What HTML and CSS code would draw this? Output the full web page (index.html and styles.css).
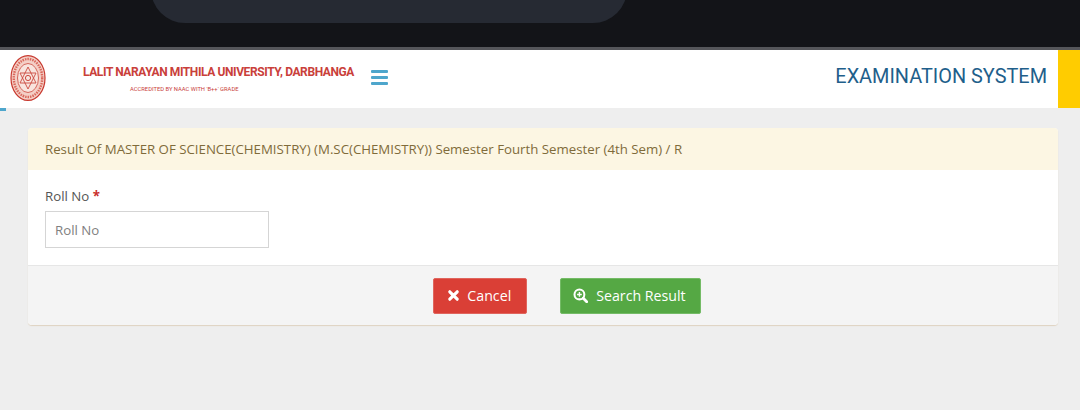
FILE: index.html
```html
<!DOCTYPE html>
<html lang="en">
<head>
    <meta charset="UTF-8">
    <meta name="viewport" content="width=device-width, initial-scale=1.0">
    <title>Examination System</title>
    <link rel="stylesheet" href="styles.css">
</head>
<body>
    <div class="statusbar"><div class="notch"></div></div>

    <header class="topnav">
        <svg class="seal" viewBox="0 0 36 46" aria-hidden="true">
            <ellipse cx="18" cy="23" rx="17" ry="22.4" fill="#f4cfc6" stroke="#c8392f" stroke-width="1.2"/>
            <ellipse cx="18" cy="23" rx="14.2" ry="19" fill="none" stroke="#d9685c" stroke-width="2.4" stroke-dasharray="1.5 1"/>
            <ellipse cx="18" cy="23" rx="10.5" ry="14.5" fill="#f8e4de" stroke="#cc463b" stroke-width="0.8"/>
            <path d="M18 12 L26 28 L10 28 Z M18 34 L10 18 L26 18 Z" fill="none" stroke="#cc4a40" stroke-width="0.9"/>
            <circle cx="18" cy="23" r="2.6" fill="none" stroke="#cc4a40"/>
        </svg>
        <div class="brand">
            <div class="brand-name">LALIT NARAYAN MITHILA UNIVERSITY, DARBHANGA</div>
            <div class="brand-sub">ACCREDITED BY NAAC WITH 'B++' GRADE</div>
        </div>
        <button class="menu-toggle" aria-label="Menu"><span></span><span></span><span></span></button>
        <div class="system-name">EXAMINATION SYSTEM</div>
        <div class="accent"></div>
    </header>
    <div class="loader"></div>

    <main class="content">
        <section class="panel">
            <div class="panel-heading">Result Of MASTER OF SCIENCE(CHEMISTRY) (M.SC(CHEMISTRY)) Semester Fourth Semester (4th Sem) / R</div>
            <div class="panel-body">
                <label class="field-label" for="rollno">Roll No <span class="required">*</span></label>
                <input class="field-input" type="text" id="rollno" placeholder="Roll No">
            </div>
            <div class="panel-footer">
                <button class="btn btn-cancel">
                    <svg class="btn-icon" viewBox="0 0 14 14" aria-hidden="true"><path d="M3 3 L11 11 M11 3 L3 11" stroke="#fff" stroke-width="3.4" stroke-linecap="round" fill="none"/></svg>
                    Cancel
                </button>
                <button class="btn btn-search">
                    <svg class="btn-icon" viewBox="0 0 14 14" aria-hidden="true"><circle cx="6" cy="6" r="4.6" stroke="#fff" stroke-width="1.9" fill="none"/><path d="M9.6 9.6 L12.8 12.8" stroke="#fff" stroke-width="2.6" stroke-linecap="round"/><path d="M6 3.8 V8.2 M3.8 6 H8.2" stroke="#fff" stroke-width="1.3"/></svg>
                    Search Result
                </button>
            </div>
        </section>
    </main>
</body>
</html>
```

FILE: styles.css
```css
* {
    box-sizing: border-box;
}

html, body {
    height: 100%;
}

body {
    margin: 0;
    background: #eeeeee;
    font-family: "Open Sans", sans-serif;
    font-size: 13.25px;
    color: #444;
    overflow: hidden;
}

.statusbar {
    height: 50px;
    background: #131418;
    border-bottom: 3px solid #55565a;
    padding-left: 151px;
    overflow: hidden;
}

/* only the bottom of the rounded shape shows, the rest is cut off at the top */
.notch {
    width: 476px;
    height: 68px;
    margin-top: -45px;
    background: #262a33;
    border-radius: 45px;
}

.topnav {
    height: 58px;
    background: #fff;
    display: flex;
    align-items: center;
    padding-left: 10px;
}

.seal {
    width: 36px;
    height: 46px;
    flex: none;
    margin-top: -2px;
}

.brand {
    margin-left: 37px;
    width: 270px;
    flex: none;
    margin-top: -1px;
    color: #c9403a;
}

.brand-name {
    font-family: "Roboto", sans-serif;
    font-size: 12px;
    letter-spacing: -0.4px;
    font-weight: 700;
    line-height: 16px;
    white-space: nowrap;
}

.brand-sub {
    margin: 5px 0 0 47px;
    font-family: "Roboto", sans-serif;
    font-size: 5.8px;
    line-height: 8px;
    white-space: nowrap;
}

.menu-toggle {
    margin-left: 18px;
    margin-top: -3px;
    width: 17px;
    padding: 0;
    border: 0;
    background: none;
    display: flex;
    flex-direction: column;
    gap: 3px;
}

.menu-toggle span {
    height: 3px;
    background: #4ea6cc;
    border-radius: 1px;
}

.system-name {
    margin-left: auto;
    margin-right: 11px;
    margin-top: -6px;
    font-family: "Roboto", sans-serif;
    font-size: 19.9px;
    color: #1f5f8b;
    white-space: nowrap;
}

.accent {
    width: 22px;
    height: 100%;
    background: #ffcc00;
}

.loader {
    width: 6px;
    height: 3px;
    background: #4ea6cc;
}

.content {
    padding: 17px 22px 0 28px;
}

.panel {
    background: #fff;
    border-radius: 4px;
    box-shadow: 0 1px 1px rgba(190, 150, 90, 0.3);
    overflow: hidden;
}

.panel-heading {
    height: 42px;
    padding: 0 17px;
    background: #fcf6e3;
    color: #7f6b3a;
    display: flex;
    align-items: center;
}

.panel-body {
    height: 96px;
    padding: 17px 17px 0;
    border-bottom: 1px solid #e6e6e6;
}

.field-label {
    display: block;
    line-height: 18px;
    margin-bottom: 6px;
    color: #555;
}

.required {
    color: #c9302c;
    font-weight: 700;
}

.field-input {
    display: block;
    width: 224px;
    height: 37px;
    padding: 0 9px;
    border: 1px solid #d5d5d5;
    font-family: inherit;
    font-size: 13.25px;
    color: #444;
    background: #fff;
    outline: none;
}

.field-input::placeholder {
    color: #808080;
    opacity: 1;
}

.panel-footer {
    height: 59px;
    background: #f4f4f4;
    display: flex;
    justify-content: center;
    align-items: center;
    gap: 33px;
    padding-left: 48px;
}

.btn {
    height: 36px;
    border: 1px solid;
    border-radius: 2px;
    display: flex;
    align-items: center;
    font-family: inherit;
    font-size: 14.2px;
    color: #fff;
}

.btn-cancel {
    padding: 0 15px 0 13px;
    gap: 7px;
    background: #da3f36;
    border-color: #e0655d;
}

.btn-cancel .btn-icon {
    width: 13px;
    height: 13px;
}

.btn-search {
    padding: 0 14px 0 12px;
    gap: 8px;
    background: #55a844;
    border-color: #74bb66;
}

.btn-search .btn-icon {
    width: 15px;
    height: 15px;
}
```
